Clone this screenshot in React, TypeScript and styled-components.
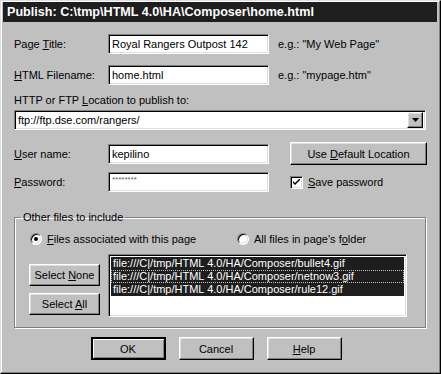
import React from "react";
import styled, {createGlobalStyle, css} from "styled-components";

const GlobalStyle = createGlobalStyle`
  html, body {
    margin: 0;
    padding: 0;
    background: #c0c0c0;
  }
  * {
    box-sizing: border-box;
  }
`

const sunken = css`
  border: 1px solid;
  border-color: #808080 #ffffff #ffffff #808080;
  box-shadow: inset 1px 1px #000000, inset -1px -1px #dfdfdf;
`

const raised = css`
  border: 1px solid;
  border-color: #ffffff #000000 #000000 #ffffff;
  box-shadow: inset -1px -1px #808080, inset 1px 1px #dfdfdf;
`

const StyledWindow = styled.div`
  width: 441px;
  height: 374px;
  padding: 1px 3px 0 2px;
  background: #c0c0c0;
  font-family: "Liberation Sans", Arial, sans-serif;
  font-size: 11px;
  color: #000;
  border: 1px solid;
  border-color: #dfdfdf #000000 #000000 #dfdfdf;
  box-shadow: inset -1px -1px #808080, inset 1px 1px #ffffff;
  overflow: hidden;
`

const StyledTitleBar = styled.div`
  height: 20px;
  background: #1e1e1e;
  color: #ffffff;
  font-weight: bold;
  font-size: 12.6px;
  line-height: 20px;
  padding-left: 4px;
  white-space: nowrap;
`

const StyledContent = styled.div`
  display: flex;
  flex-direction: column;
  padding: 12px 11px 0 11px;
`

const StyledFieldRow = styled.div<{ $top: number }>`
  display: grid;
  grid-template-columns: 94px 161px 1fr;
  align-items: center;
  margin-top: ${props => props.$top}px;
`

const StyledLabel = styled.label`
  white-space: nowrap;
`

const StyledInput = styled.div<{ $masked?: boolean }>`
  ${sunken};
  height: 20px;
  background: #ffffff;
  padding: 0 3px;
  line-height: 18px;
  white-space: nowrap;
  overflow: hidden;
  ${props => props.$masked && css`
    font-size: 8px;
    color: #606060;
    line-height: 14px;
  `}
`

const StyledHint = styled.span`
  padding-left: 9px;
  white-space: nowrap;
`

const StyledSideCell = styled.div`
  padding-left: 21px;
  display: flex;
  align-items: center;
`

const StyledCaption = styled.div`
  margin-top: 8px;
  height: 14px;
  line-height: 14px;
`

const StyledCombo = styled.div`
  ${sunken};
  margin-top: 3px;
  height: 20px;
  background: #ffffff;
  display: flex;
  align-items: center;
  padding: 0 2px 0 3px;
`

const StyledComboText = styled.span`
  flex: 1;
  white-space: nowrap;
`

const StyledDropButton = styled.div`
  ${raised};
  width: 16px;
  height: 16px;
  background: #c0c0c0;
  display: flex;
  align-items: center;
  justify-content: center;
`

const StyledButton = styled.div<{ $width: number, $height?: number, $isDefault?: boolean }>`
  ${raised};
  width: ${props => props.$width}px;
  height: ${props => props.$height ?? 23}px;
  background: #c0c0c0;
  display: flex;
  align-items: center;
  justify-content: center;
  white-space: nowrap;
  ${props => props.$isDefault && css`
    border: 2px solid;
    border-color: #000;
    box-shadow: inset 1px 1px #ffffff, inset -1px -1px #808080;
  `}
`

const StyledCheckbox = styled.div`
  ${sunken};
  width: 13px;
  height: 13px;
  background: #ffffff;
  margin-right: 5px;
  display: flex;
  align-items: center;
  justify-content: center;
`

const StyledGroup = styled.fieldset`
  margin: 19px 0 0 0;
  padding: 0 0 10px 0;
  height: 117px;
  border: 1px solid #808080;
  box-shadow: 1px 1px #ffffff, inset 1px 1px #ffffff;
  min-width: 0;
`

const StyledLegend = styled.legend`
  margin-left: 6px;
  padding: 0 2px;
  line-height: 12px;
`

const StyledRadioRow = styled.div`
  display: flex;
  align-items: center;
  height: 14px;
  margin-top: 9px;
  padding-left: 15px;
`

const StyledRadioOption = styled.div<{ $width?: number }>`
  display: flex;
  align-items: center;
  width: ${props => props.$width ? `${props.$width}px` : 'auto'};
`

const StyledRadio = styled.div<{ $checked: boolean }>`
  width: 12px;
  height: 12px;
  border-radius: 50%;
  background: #ffffff;
  border: 1px solid;
  border-color: #808080 #ffffff #ffffff #808080;
  box-shadow: inset 1px 1px #000, inset -1px -1px #dfdfdf;
  margin-right: 5px;
  display: flex;
  align-items: center;
  justify-content: center;

  &::after {
    content: "";
    width: 4px;
    height: 4px;
    border-radius: 50%;
    background: #000;
    display: ${props => props.$checked ? 'block' : 'none'};
  }
`

const StyledFilesArea = styled.div`
  display: flex;
  margin-top: 8px;
  padding-left: 14px;
`

const StyledSideButtons = styled.div`
  display: flex;
  flex-direction: column;
  gap: 7px;
  padding-top: 10px;
  width: 79px;
`

const StyledListbox = styled.div`
  ${sunken};
  width: 299px;
  height: 63px;
  background: #ffffff;
  padding: 2px;
  overflow: hidden;
`

const StyledListItem = styled.div<{ $focused?: boolean }>`
  height: 13px;
  line-height: 12px;
  padding-left: 2px;
  background: #1e1e1e;
  color: #ffffff;
  white-space: nowrap;
  ${props => props.$focused && css`
    outline: 1px dotted #c0c0c0;
    outline-offset: -1px;
  `}
`

const StyledFooter = styled.div`
  display: flex;
  justify-content: center;
  gap: 13px;
  margin-top: 9px;
  padding-right: 8px;
`

const files = [
  'file:///C|/tmp/HTML 4.0/HA/Composer/bullet4.gif',
  'file:///C|/tmp/HTML 4.0/HA/Composer/netnow3.gif',
  'file:///C|/tmp/HTML 4.0/HA/Composer/rule12.gif',
]

const App: React.FC = () => {
  return (
    <>
      <GlobalStyle/>
      <StyledWindow>
        <StyledTitleBar>Publish: C:\tmp\HTML 4.0\HA\Composer\home.html</StyledTitleBar>
        <StyledContent>
          <StyledFieldRow $top={0}>
            <StyledLabel>Page <u>T</u>itle:</StyledLabel>
            <StyledInput>Royal Rangers Outpost 142</StyledInput>
            <StyledHint>e.g.: "My Web Page"</StyledHint>
          </StyledFieldRow>
          <StyledFieldRow $top={11}>
            <StyledLabel><u>H</u>TML Filename:</StyledLabel>
            <StyledInput>home.html</StyledInput>
            <StyledHint>e.g.: "mypage.htm"</StyledHint>
          </StyledFieldRow>

          <StyledCaption>HTTP or FTP <u>L</u>ocation to publish to:</StyledCaption>
          <StyledCombo>
            <StyledComboText>ftp://ftp.dse.com/rangers/</StyledComboText>
            <StyledDropButton>
              <svg width="7" height="4" viewBox="0 0 7 4">
                <path d="M0 0h7L3.5 4z" fill="#000"/>
              </svg>
            </StyledDropButton>
          </StyledCombo>

          <StyledFieldRow $top={12}>
            <StyledLabel><u>U</u>ser name:</StyledLabel>
            <StyledInput>kepilino</StyledInput>
            <StyledSideCell>
              <StyledButton $width={137}><span>Use <u>D</u>efault Location</span></StyledButton>
            </StyledSideCell>
          </StyledFieldRow>
          <StyledFieldRow $top={7}>
            <StyledLabel><u>P</u>assword:</StyledLabel>
            <StyledInput $masked>********</StyledInput>
            <StyledSideCell>
              <StyledCheckbox>
                <svg width="7" height="7" viewBox="0 0 7 7">
                  <path d="M0 2v2l2 2 5-5V-1L2 4z" fill="#000"/>
                </svg>
              </StyledCheckbox>
              <span><u>S</u>ave password</span>
            </StyledSideCell>
          </StyledFieldRow>

          <StyledGroup>
            <StyledLegend>Other files to include</StyledLegend>
            <StyledRadioRow>
              <StyledRadioOption $width={207}>
                <StyledRadio $checked/>
                <span><u>F</u>iles associated with this page</span>
              </StyledRadioOption>
              <StyledRadioOption>
                <StyledRadio $checked={false}/>
                <span>All files in page's f<u>o</u>lder</span>
              </StyledRadioOption>
            </StyledRadioRow>
            <StyledFilesArea>
              <StyledSideButtons>
                <StyledButton $width={71} $height={22}><span>Select <u>N</u>one</span></StyledButton>
                <StyledButton $width={71} $height={22}><span>Select <u>A</u>ll</span></StyledButton>
              </StyledSideButtons>
              <StyledListbox>
                {files.map((f, i) => (
                  <StyledListItem key={f} $focused={i === 1}>{f}</StyledListItem>
                ))}
              </StyledListbox>
            </StyledFilesArea>
          </StyledGroup>

          <StyledFooter>
            <StyledButton $width={75} $isDefault>OK</StyledButton>
            <StyledButton $width={75}>Cancel</StyledButton>
            <StyledButton $width={75}><u>H</u>elp</StyledButton>
          </StyledFooter>
        </StyledContent>
      </StyledWindow>
    </>
  )
}

export default App;
